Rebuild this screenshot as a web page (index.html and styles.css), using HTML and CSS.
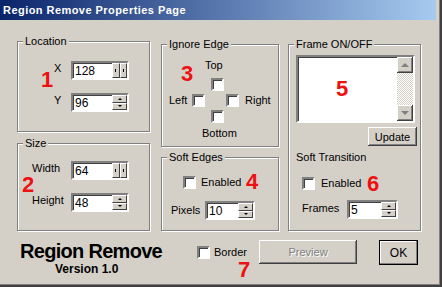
FILE: index.html
```html
<!DOCTYPE html>
<html lang="en">
<head>
    <meta charset="UTF-8">
    <title>Region Remove Properties Page</title>
    <link rel="stylesheet" href="styles.css">
</head>
<body>
    <div class="window">
        <div class="titlebar">Region Remove Properties Page</div>

        <div class="panel">
            <div class="column col-left">
                <fieldset class="group group-location">
                    <legend>Location</legend>
                    <div class="rows rows-location">
                        <div class="field-row">
                            <span class="field-label">X</span>
                            <div class="spin">
                                <span class="spin-value">128</span>
                                <span class="spin-btns horiz">
                                    <span class="spin-btn"><i class="dot"></i></span>
                                    <span class="spin-btn"><i class="dot"></i></span>
                                </span>
                            </div>
                        </div>
                        <div class="field-row">
                            <span class="field-label">Y</span>
                            <div class="spin">
                                <span class="spin-value">96</span>
                                <span class="spin-btns">
                                    <span class="spin-btn up"></span>
                                    <span class="spin-btn down"></span>
                                </span>
                            </div>
                        </div>
                    </div>
                </fieldset>

                <fieldset class="group group-size">
                    <legend>Size</legend>
                    <div class="rows rows-size">
                        <div class="field-row">
                            <span class="field-label">Width</span>
                            <div class="spin">
                                <span class="spin-value">64</span>
                                <span class="spin-btns horiz">
                                    <span class="spin-btn"><i class="dot"></i></span>
                                    <span class="spin-btn"><i class="dot"></i></span>
                                </span>
                            </div>
                        </div>
                        <div class="field-row">
                            <span class="field-label">Height</span>
                            <div class="spin">
                                <span class="spin-value">48</span>
                                <span class="spin-btns">
                                    <span class="spin-btn up"></span>
                                    <span class="spin-btn down"></span>
                                </span>
                            </div>
                        </div>
                    </div>
                </fieldset>
            </div>

            <div class="column col-mid">
                <fieldset class="group group-edge">
                    <legend>Ignore Edge</legend>
                    <div class="edge-cross">
                        <span class="edge-top">Top</span>
                        <span class="check cb-top"></span>
                        <span class="edge-left">Left</span>
                        <span class="check cb-left"></span>
                        <span class="check cb-right"></span>
                        <span class="edge-right">Right</span>
                        <span class="check cb-bottom"></span>
                        <span class="edge-bottom">Bottom</span>
                    </div>
                </fieldset>

                <fieldset class="group group-soft">
                    <legend>Soft Edges</legend>
                    <div class="check-row soft-check">
                        <span class="check"></span>
                        <span class="check-text">Enabled</span>
                    </div>
                    <div class="field-row pixels-row">
                        <span class="field-label">Pixels</span>
                        <div class="spin spin-small">
                            <span class="spin-value">10</span>
                            <span class="spin-btns">
                                <span class="spin-btn up"></span>
                                <span class="spin-btn down"></span>
                            </span>
                        </div>
                    </div>
                </fieldset>
            </div>

            <div class="column col-right">
                <fieldset class="group group-frame">
                    <legend>Frame ON/OFF</legend>
                    <div class="listbox">
                        <div class="list-area"></div>
                        <div class="scrollbar">
                            <span class="scroll-btn up"></span>
                            <span class="scroll-track"></span>
                            <span class="scroll-btn down"></span>
                        </div>
                    </div>
                    <button class="btn btn-update">Update</button>
                    <div class="sub-title">Soft Transition</div>
                    <div class="check-row trans-check">
                        <span class="check"></span>
                        <span class="check-text">Enabled</span>
                    </div>
                    <div class="field-row frames-row">
                        <span class="field-label">Frames</span>
                        <div class="spin spin-frames">
                            <span class="spin-value">5</span>
                            <span class="spin-btns">
                                <span class="spin-btn up"></span>
                                <span class="spin-btn down"></span>
                            </span>
                        </div>
                    </div>
                </fieldset>
            </div>
        </div>

        <div class="footer">
            <div class="logo">
                <div class="logo-name">Region Remove</div>
                <div class="logo-version">Version 1.0</div>
            </div>
            <div class="check-row border-check">
                <span class="check"></span>
                <span class="check-text">Border</span>
            </div>
            <button class="btn btn-preview" disabled>Preview</button>
            <button class="btn btn-ok">OK</button>
        </div>

        <!-- red callout numbers drawn over the dialog -->
        <span class="mark mark-1">1</span>
        <span class="mark mark-2">2</span>
        <span class="mark mark-3">3</span>
        <span class="mark mark-4">4</span>
        <span class="mark mark-5">5</span>
        <span class="mark mark-6">6</span>
        <span class="mark mark-7">7</span>
    </div>
</body>
</html>
```

FILE: styles.css
```css
* , *::after , *::before{
    box-sizing: border-box;
    margin: 0;
    padding: 0;
}
html , body{
    width: 100%;
    height: 100%;
}
body{
    margin: 0;
    font-family: "Liberation Sans", Arial, sans-serif;
    font-size: 11px;
    line-height: 13px;
    color: #000;
    background: #d4d0c8;
}
.window{
    position: relative;
    width: 442px;
    height: 287px;
    background: #d4d0c8;
    box-shadow: inset -1px -1px 0 #404040, inset -2px -2px 0 #404040, inset -3px -3px 0 #808080;
    overflow: hidden;
}
.titlebar{
    height: 20px;
    margin-right: 6px;
    padding-left: 3px;
    background: linear-gradient(to right, #0a246a, #a6caf0);
    color: #fff;
    font-weight: bold;
    font-size: 11px;
    line-height: 20px;
    letter-spacing: 0.45px;
}

/* three columns of group boxes */
.panel{
    display: flex;
    align-items: flex-start;
    padding-left: 17px;
}
.column{
    display: flex;
    flex-direction: column;
}
.col-left{
    width: 133px;
    margin-top: 15px;
}
.col-mid{
    width: 118px;
    margin-top: 18px;
    margin-left: 11px;
}
.col-right{
    width: 133px;
    margin-top: 18px;
    margin-left: 9px;
}
.group{
    border: 1px solid #808080;
    box-shadow: inset 1px 1px 0 #fff, 1px 1px 0 #fff;
    min-width: 0;
    margin: 0;
    padding: 0;
}
.group legend{
    margin-left: 5px;
    padding: 0 2px;
    line-height: 13px;
    background: #d4d0c8;
}
.group-location{ height: 97px; }
.group-size{ height: 94px; margin-top: 5px; }
.group-edge{ height: 109px; }
.group-soft{ height: 80px; margin-top: 4px; }
.group-frame{ height: 193px; }

/* label + spin box rows */
.rows{
    display: flex;
    flex-direction: column;
    gap: 13px;
}
.rows-location{
    padding: 13px 0 0 36px;
}
.rows-location .field-label{ width: 17px; }
.rows-size{
    padding: 11px 0 0 14px;
}
.rows-size .field-label{ width: 39px; }
.field-row{
    display: flex;
    align-items: flex-start;
}
.field-label{
    padding-top: 1px;
}

.spin{
    display: flex;
    width: 58px;
    height: 19px;
    background: #fff;
    border: 2px solid;
    border-color: #808080 #fff #fff #808080;
    box-shadow: inset 1px 1px 0 #404040;
}
.spin-value{
    flex: 1;
    padding: 1px 0 0 2px;
    font-size: 12px;
    line-height: 14px;
}
.spin-btns{
    display: flex;
    flex-direction: column;
    width: 15px;
}
.spin-btns.horiz{
    flex-direction: row;
}
.spin-btn{
    position: relative;
    flex: 1;
    background: #d4d0c8;
    border: 1px solid;
    border-color: #fff #404040 #404040 #fff;
    display: flex;
    align-items: center;
    justify-content: center;
}
.spin-btn.up::after{
    content: "";
    border-left: 2px solid transparent;
    border-right: 2px solid transparent;
    border-bottom: 2px solid #000;
}
.spin-btn.down::after{
    content: "";
    border-left: 2px solid transparent;
    border-right: 2px solid transparent;
    border-top: 2px solid #000;
}
.dot{
    width: 1px;
    height: 3px;
    background: #000;
}

/* checkboxes */
.check{
    display: inline-block;
    width: 13px;
    height: 13px;
    background: #fff;
    border: 2px solid;
    border-color: #808080 #fff #fff #808080;
    box-shadow: inset 1px 1px 0 #404040;
}
.check-row{
    display: flex;
    align-items: center;
}

/* ignore edge cross */
.edge-cross{
    display: grid;
    grid-template-columns: 23px 13px 6px 13px 2px 13px auto;
    grid-template-rows: 16px 13px 13px 13px 14px;
    row-gap: 3px;
    margin: 8px 0 0 7px;
}
.edge-top{
    grid-column: 3 / 8;
    grid-row: 1;
}
.cb-top{
    grid-column: 4;
    grid-row: 2;
}
.edge-left{
    grid-column: 1;
    grid-row: 3;
}
.cb-left{
    grid-column: 2;
    grid-row: 3;
}
.cb-right{
    grid-column: 6;
    grid-row: 3;
}
.edge-right{
    grid-column: 7;
    grid-row: 3;
    padding-left: 6px;
}
.cb-bottom{
    grid-column: 4;
    grid-row: 4;
}
.edge-bottom{
    grid-column: 3 / 8;
    grid-row: 5;
    align-self: end;
    margin-left: -3px;
}

/* soft edges */
.soft-check{
    margin: 12px 0 0 21px;
    gap: 5px;
}
.pixels-row{
    margin: 12px 0 0 9px;
}
.pixels-row .field-label{
    width: 34px;
    padding-top: 3px;
}
.spin-small{ width: 50px; }

/* frame list */
.listbox{
    display: flex;
    width: 119px;
    height: 68px;
    margin: 4px 0 0 7px;
    border: 2px solid;
    border-color: #808080 #fff #fff #808080;
    box-shadow: inset 1px 1px 0 #404040;
    background: #fff;
}
.list-area{
    flex: 1;
}
.scrollbar{
    width: 16px;
    display: flex;
    flex-direction: column;
}
.scroll-btn{
    height: 16px;
    background: #d4d0c8;
    box-shadow: inset -1px -1px 0 #404040, inset 1px 1px 0 #fff, inset -2px -2px 0 #808080;
    display: flex;
    align-items: center;
    justify-content: center;
}
.scroll-btn.up::after{
    content: "";
    border-left: 4px solid transparent;
    border-right: 4px solid transparent;
    border-bottom: 4px solid #808080;
}
.scroll-btn.down::after{
    content: "";
    border-left: 4px solid transparent;
    border-right: 4px solid transparent;
    border-top: 4px solid #808080;
}
.scroll-track{
    flex: 1;
    background: repeating-conic-gradient(#fff 0 25%, #d4d0c8 0 50%) 0 0 / 2px 2px;
}

/* buttons */
.btn{
    font-family: "Liberation Sans", Arial, sans-serif;
    font-size: 11px;
    color: #000;
    background: #d4d0c8;
    border: none;
    box-shadow: inset -1px -1px 0 #404040, inset 1px 1px 0 #fff, inset -2px -2px 0 #808080;
}
.btn-update{
    width: 49px;
    height: 19px;
    margin: 4px 0 0 79px;
}
.sub-title{
    margin: 5px 0 0 7px;
}
.trans-check{
    margin: 13px 0 0 13px;
    gap: 6px;
}
.frames-row{
    margin: 10px 0 0 13px;
}
.frames-row .field-label{
    width: 45px;
    padding-top: 2px;
}
.spin-frames{ width: 51px; }

/* bottom strip */
.footer{
    display: flex;
    align-items: flex-start;
    margin-top: 9px;
    padding-left: 20px;
}
.logo{
    width: 141px;
    font-weight: bold;
}
.logo-name{
    font-size: 20px;
    line-height: 22px;
    letter-spacing: -0.7px;
    white-space: nowrap;
}
.logo-version{
    font-size: 12px;
    line-height: 14px;
    margin-left: 35px;
}
.border-check{
    margin: 6px 0 0 36px;
    gap: 4px;
}
.btn-preview{
    width: 98px;
    height: 24px;
    margin-left: 12px;
    color: #808080;
    text-shadow: 1px 1px 0 #fff;
}
.btn-ok{
    width: 39px;
    height: 25px;
    margin-left: 22px;
    border: 1px solid #000;
    box-shadow: inset -1px -1px 0 #808080, inset 1px 1px 0 #fff;
    font-size: 12px;
}

/* red numbers */
.mark{
    position: absolute;
    color: #ee1111;
    font-weight: bold;
    font-size: 22px;
    line-height: 22px;
}
.mark-1{ left: 41px; top: 69px; }
.mark-2{ left: 22px; top: 174px; }
.mark-3{ left: 181px; top: 63px; }
.mark-4{ left: 246px; top: 171px; }
.mark-5{ left: 336px; top: 78px; }
.mark-6{ left: 367px; top: 173px; }
.mark-7{ left: 238px; top: 259px; }
```
